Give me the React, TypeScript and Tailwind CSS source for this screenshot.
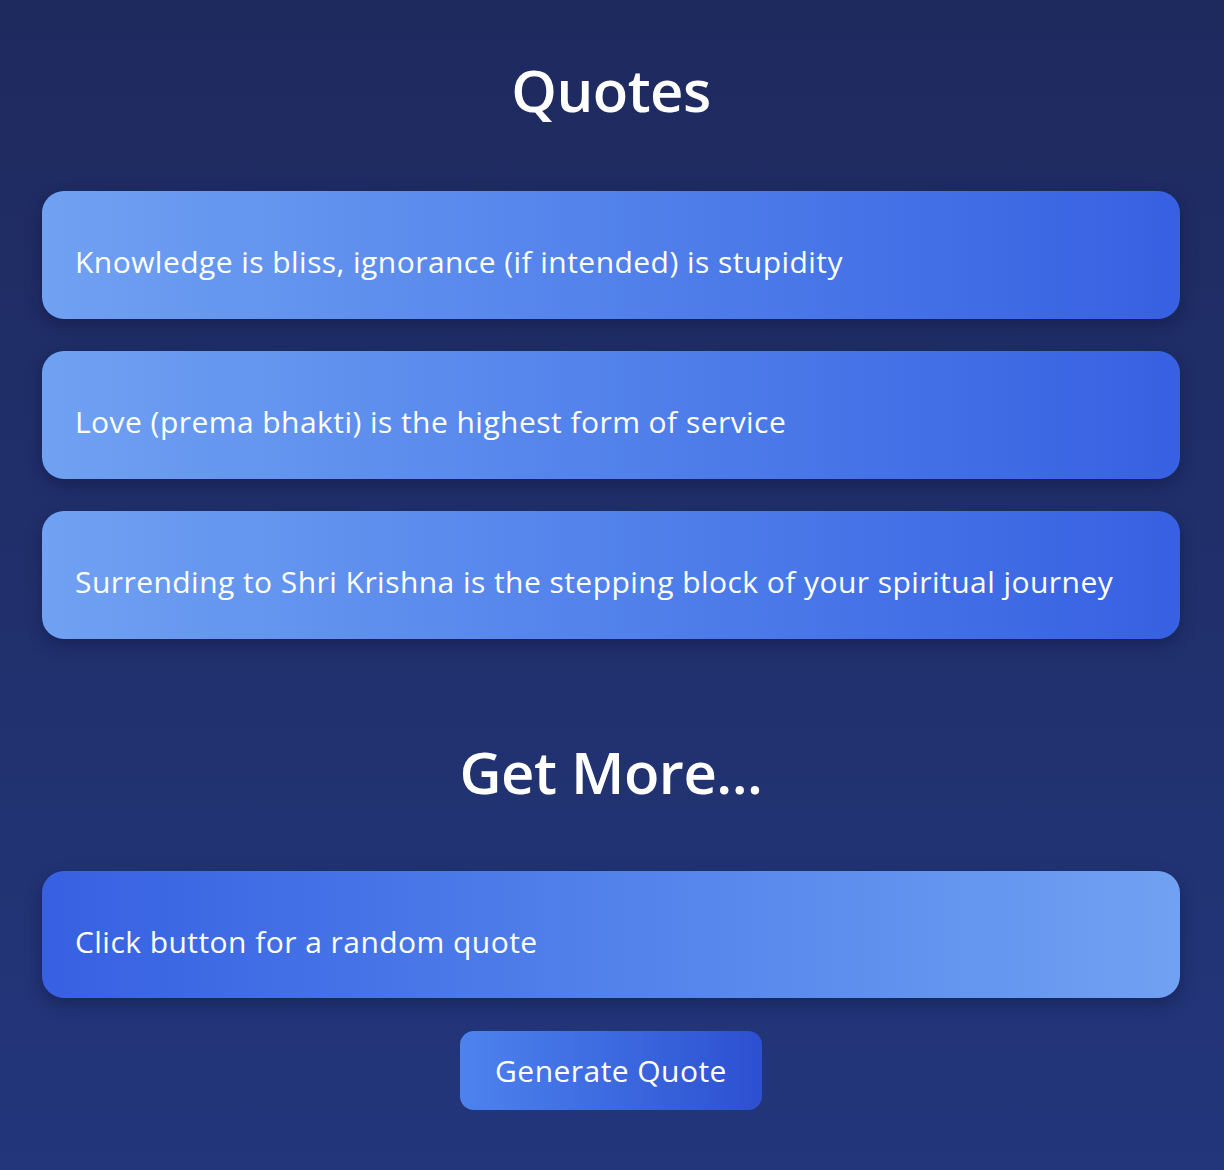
import React from "react";

const quotes = [
  "Knowledge is bliss, ignorance (if intended) is stupidity",
  "Love (prema bhakti) is the highest form of service",
  "Surrending to Shri Krishna is the stepping block of your spiritual journey",
];

export default function App() {
  return (
    <div
      className="min-h-[1170px] w-full bg-gradient-to-b from-[#1e2a5e] to-[#23367b] pl-[42px] pr-[44px] text-white"
      style={{ fontFamily: "'Open Sans', Lato, sans-serif" }}
    >
      <h1 className="pt-[56px] text-center text-[58px] font-semibold leading-[68px] tracking-[-0.5px]">
        Quotes
      </h1>
      <div className="mt-[67px] flex flex-col gap-[32px]">
        {quotes.map((q) => (
          <div
            key={q}
            className="flex h-[128px] items-center rounded-[22px] bg-gradient-to-r from-[#70a1f2] to-[#3760e2] px-[33px] pt-[14px] text-[30px] font-medium leading-[34px] tracking-[0.45px] shadow-[0_6px_16px_rgba(10,20,60,0.45)]"
          >
            {q}
          </div>
        ))}
      </div>
      <h2 className="mt-[99px] text-center text-[58px] font-semibold leading-[68px] tracking-[-0.5px]">
        Get More...
      </h2>
      <div className="mt-[65px] flex h-[127px] items-center rounded-[22px] bg-gradient-to-r from-[#3760e2] to-[#70a1f2] px-[33px] pt-[14px] text-[30px] font-medium leading-[34px] tracking-[0.45px] shadow-[0_6px_16px_rgba(10,20,60,0.45)]">
        Click button for a random quote
      </div>
      <div className="mt-[33px] flex justify-center">
        <button className="h-[79px] w-[302px] rounded-[14px] bg-gradient-to-r from-[#4e83ee] to-[#2d4fd1] text-[30px] font-medium tracking-[0.45px] text-white">
          Generate Quote
        </button>
      </div>
    </div>
  );
}
